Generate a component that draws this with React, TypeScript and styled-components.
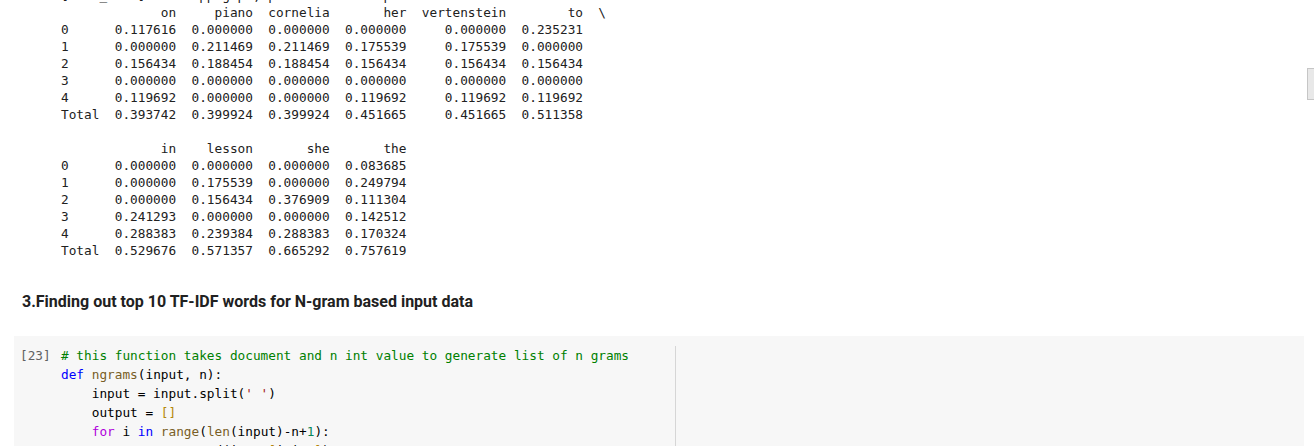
import React from "react";
import styled, { createGlobalStyle } from "styled-components";

const Global = createGlobalStyle`
  html, body { margin: 0; padding: 0; background: #ffffff; }
  body { overflow: hidden; font-family: Roboto, "Noto Sans", sans-serif; }
`;

const MONO = `"DejaVu Sans Mono", "Liberation Mono", monospace`;

const Page = styled.div`
  position: relative;
  display: flex;
  flex-direction: column;
  width: 1314px;
  height: 446px;
  overflow: hidden;
`;

const Output = styled.pre`
  margin: -13px 0 0 0;
  padding: 0 0 0 61px;
  font-family: ${MONO};
  font-size: 12.75px;
  line-height: 17px;
  color: #212121;
  white-space: pre;
`;

const Heading = styled.h3`
  margin: 31px 0 0 22px;
  font-family: Roboto, "Noto Sans", sans-serif;
  font-weight: 700;
  font-size: 16px;
  line-height: 24px;
  color: #212121;
`;

const CodeCell = styled.div`
  margin: 22px 0 0 14px;
  width: 1290px;
  flex: 1;
  background: #f7f7f7;
  display: flex;
  align-items: stretch;
  padding-top: 10px;
`;

const Prompt = styled.div`
  width: 47px;
  flex: none;
  padding-left: 6px;
  box-sizing: border-box;
  font-family: ${MONO};
  font-size: 12.75px;
  line-height: 19px;
  color: #616161;
  white-space: pre;
`;

const Editor = styled.pre`
  margin: 0;
  width: 80ch;
  border-right: 1px solid #d6d6d6;
  font-family: ${MONO};
  font-size: 12.75px;
  line-height: 19px;
  color: #000000;
  white-space: pre;
`;

const Tok = styled.span<{ $c: string }>`
  color: ${(p) => p.$c};
`;

const ScrollThumb = styled.div`
  position: absolute;
  right: 0;
  top: 68px;
  width: 6px;
  height: 30px;
  background: #e8e8e8;
  border: 1px solid #c6c6c6;
  border-right: none;
`;

const C = {
  comment: "#008000",
  kw: "#0000ff",
  ctrl: "#af00db",
  fn: "#795e26",
  br: "#b5870b",
  num: "#098658",
  str: "#a31515",
};

type Table = { cols: string[]; rows: [string, string[]][] };

const t1: Table = {
  cols: ["on", "piano", "cornelia", "her", "vertenstein", "to"],
  rows: [
    ["0", ["0.117616", "0.000000", "0.000000", "0.000000", "0.000000", "0.235231"]],
    ["1", ["0.000000", "0.211469", "0.211469", "0.175539", "0.175539", "0.000000"]],
    ["2", ["0.156434", "0.188454", "0.188454", "0.156434", "0.156434", "0.156434"]],
    ["3", ["0.000000", "0.000000", "0.000000", "0.000000", "0.000000", "0.000000"]],
    ["4", ["0.119692", "0.000000", "0.000000", "0.119692", "0.119692", "0.119692"]],
    ["Total", ["0.393742", "0.399924", "0.399924", "0.451665", "0.451665", "0.511358"]],
  ],
};

const t2: Table = {
  cols: ["in", "lesson", "she", "the"],
  rows: [
    ["0", ["0.000000", "0.000000", "0.000000", "0.083685"]],
    ["1", ["0.000000", "0.175539", "0.000000", "0.249794"]],
    ["2", ["0.000000", "0.156434", "0.376909", "0.111304"]],
    ["3", ["0.241293", "0.000000", "0.000000", "0.142512"]],
    ["4", ["0.288383", "0.239384", "0.288383", "0.170324"]],
    ["Total", ["0.529676", "0.571357", "0.665292", "0.757619"]],
  ],
};

function render(t: Table, cont: boolean): string {
  const widths = t.cols.map((c) => Math.max(c.length, 8));
  const head =
    " ".repeat(5) +
    t.cols.map((c, i) => "  " + c.padStart(widths[i])).join("") +
    (cont ? "  \\" : "");
  const body = t.rows.map(
    ([label, vals]) =>
      label.padEnd(5) + vals.map((v, i) => "  " + v.padStart(widths[i])).join("")
  );
  return [head, ...body].join("\n");
}

const outputText =
  "[word_list]       ppig p , p              p\n" +
  render(t1, true) +
  "\n\n" +
  render(t2, false);

export default function App() {
  return (
    <>
      <Global />
      <Page>
        <Output>{outputText}</Output>
        <Heading>3.Finding out top 10 TF-IDF words for N-gram based input data</Heading>
        <CodeCell>
          <Prompt>[23]</Prompt>
          <Editor>
            <Tok $c={C.comment}># this function takes document and n int value to generate list of n grams</Tok>
            {"\n"}
            <Tok $c={C.kw}>def</Tok> <Tok $c={C.fn}>ngrams</Tok>(input, n):
            {"\n"}
            {"    input = input.split("}
            <Tok $c={C.str}>' '</Tok>)
            {"\n"}
            {"    output = "}
            <Tok $c={C.br}>[]</Tok>
            {"\n"}
            {"    "}
            <Tok $c={C.ctrl}>for</Tok> i <Tok $c={C.kw}>in</Tok> <Tok $c={C.fn}>range</Tok>(
            <Tok $c={C.fn}>len</Tok>(input)-n+<Tok $c={C.num}>1</Tok>):
            {"\n"}
            {"        output.append(input"}
            <Tok $c={C.br}>[</Tok>i:i+n<Tok $c={C.br}>]</Tok>)
            {"\n"}
            {"    "}
            <Tok $c={C.ctrl}>return</Tok> output
          </Editor>
        </CodeCell>
        <ScrollThumb />
      </Page>
    </>
  );
}
